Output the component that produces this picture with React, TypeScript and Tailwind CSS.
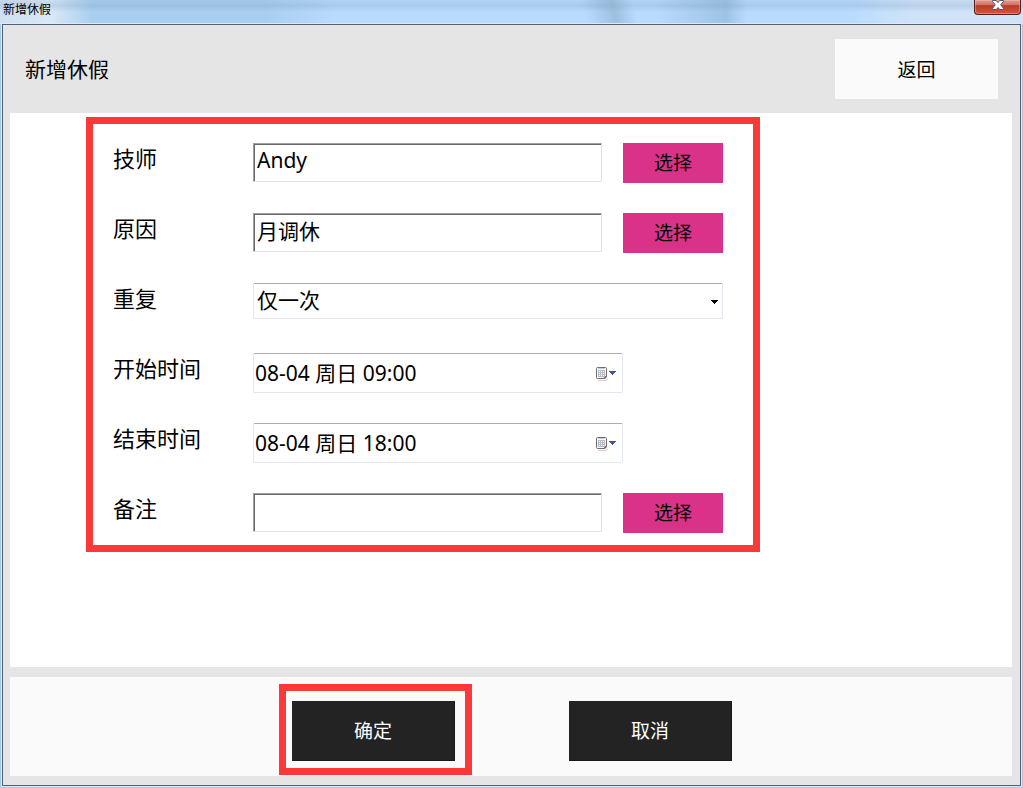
import type { ReactNode } from "react";

const FIELD_TEXT = "text-[21px] leading-8 text-black";
const THIN_BORDER =
  "rounded-xs border border-[#e2e6ee] border-t-[#abadb3] bg-white";
const SUNKEN_BORDER =
  "border border-[#e3e3e3] border-t-[#a0a0a0] border-l-[#a0a0a0] bg-white shadow-[inset_1px_1px_0_#696969]";

function Row({
  id,
  label,
  children,
}: {
  id: string;
  label: string;
  children: ReactNode;
}) {
  return (
    <div className="flex h-10 items-start">
      <label
        htmlFor={id}
        className="w-[140px] shrink-0 text-[22px] leading-[30px] text-black"
      >
        {label}
      </label>
      {children}
    </div>
  );
}

function PickerRow({
  id,
  label,
  value,
}: {
  id: string;
  label: string;
  value: string;
}) {
  return (
    <Row id={id} label={label}>
      <input
        id={id}
        type="text"
        defaultValue={value}
        className={`h-[39px] min-w-0 flex-1 rounded-none px-[3px] pb-1.5 outline-none ${SUNKEN_BORDER} ${FIELD_TEXT}`}
      />
      <button
        type="button"
        className="ml-[21px] h-10 w-[100px] shrink-0 bg-[#db3289] text-[19px] text-black"
      >
        选择
      </button>
    </Row>
  );
}

function CalendarIcon() {
  return (
    <svg width="21" height="14" viewBox="0 0 21 14" aria-hidden="true">
      <path d="M2 13h8l2-2v1l-2 2H2z" fill="#d0d0d0" />
      <path d="M.5 1.5Q.5.5 1.5.5h9v9.5l-2 2h-7q-1 0-1-1z" fill="#f5f6f8" />
      <path
        d="M8.500 11.500h-7q-1 0-1-1v-9q0-1 1-1h8q1 0 1 1V9.500"
        fill="none"
        stroke="#7a6a66"
      />
      <path d="M8 9h3v1l-2 2H8z" fill="#85736f" />
      <path d="M2 1h7v1H2z" fill="#c9cdd3" />
      <path d="M2 3h7v7H2z" fill="#b4bfca" />
      <path
        d="M3 4h1v1H3zM5 4h1v1H5zM7 4h1v1H7zM3 6h1v1H3zM5 6h1v1H5zM7 6h1v1H7zM3 8h1v1H3zM5 8h1v1H5zM7 8h1v1H7z"
        fill="#fff"
      />
      <path d="M13 4h7v1h-1v1h-1v1h-1v1h-1V7h-1V6h-1V5h-1z" fill="#42598a" />
    </svg>
  );
}

function DateRow({
  id,
  label,
  value,
}: {
  id: string;
  label: string;
  value: string;
}) {
  return (
    <Row id={id} label={label}>
      <div className="flex min-w-0 flex-1 pr-[100px]">
        <div
          className={`flex h-10 min-w-0 flex-1 items-center pr-[5px] pl-px ${THIN_BORDER}`}
        >
          <input
            id={id}
            type="text"
            defaultValue={value}
            className={`min-w-0 flex-1 bg-transparent outline-none ${FIELD_TEXT}`}
          />
          <button type="button" aria-label={`${label} 日历`} className="pt-0.5">
            <CalendarIcon />
          </button>
        </div>
      </div>
    </Row>
  );
}

function FooterButton({ children }: { children: ReactNode }) {
  return (
    <button
      type="button"
      className="h-[60px] w-[163px] border-r border-b border-[#191919] bg-[#232323] pt-0.5 text-[19px] text-white"
    >
      {children}
    </button>
  );
}

export default function App() {
  return (
    <div className="flex min-h-screen flex-col bg-[#a9cbee] font-['Noto_Sans','Noto_Sans_CJK_SC',sans-serif]">
      <header className="flex h-6 items-start justify-between bg-[linear-gradient(to_bottom,rgba(110,140,175,0.1),rgba(110,140,175,0.22)_25%,transparent_50%),linear-gradient(75deg,transparent_57%,rgba(120,160,185,0.45)_60%,transparent_62%),linear-gradient(to_right,#cfe0f2,#d9e8f6_5%,#a9cfef_9%,#a9cfef_26%,#b9dcfd_33%,#b9dcfd_64%,#9dc3e2_71%,#b9dcfd_73%,#b9dcfd_83%,#d0e4f8_90%)] pr-0.5">
        <span className="pl-[3px] text-[12px] leading-5 text-black">
          新增休假
        </span>
        <button
          type="button"
          aria-label="关闭"
          className="flex h-[15px] w-[47px] items-start justify-center rounded-b-[4px] border border-t-0 border-[#5a1e1e] bg-[linear-gradient(to_bottom,#dd9c90,#cf7565_35%,#bb3a25_40%,#d2553c)] shadow-[inset_0_0_0_1px_rgba(255,200,190,0.4)]"
        >
          <svg width="12" height="10" viewBox="0 0 12 10" aria-hidden="true">
            <path
              d="M.5 .5h3.800L6 2.500 7.700.5h3.800v1L8.700 4.800l2.800 3.500v1.200H7.700L6 7.500 4.300 9.500H.5V8.300l2.800-3.500L.5 1.500z"
              fill="#fff"
              stroke="#535666"
            />
          </svg>
        </button>
      </header>

      <main className="mx-0.5 mb-0.5 flex flex-1 flex-col border border-[#53616f] bg-[#e5e5e5] pr-2 pb-[9px] pl-[7px] shadow-[0_0_0_1px_#d9eafa]">
        <div className="flex h-[88px] shrink-0 items-center justify-between pr-[14px] pl-[15px]">
          <h1 className="pt-0.5 text-[21px] text-black">新增休假</h1>
          <button
            type="button"
            className="h-[60px] w-[163px] bg-[#fafafa] pt-0.5 text-[19px] text-black"
          >
            返回
          </button>
        </div>

        <section className="flex-1 bg-white pt-1 pl-[76px]">
          <form className="flex max-w-[674px] flex-col gap-[30px] border-7 border-[#fc3838] pt-[19px] pr-[30px] pb-3 pl-5">
            <PickerRow id="technician" label="技师" value="Andy" />
            <PickerRow id="reason" label="原因" value="月调休" />
            <Row id="repeat" label="重复">
              <div className="grid min-w-0 flex-1 items-center">
                <select
                  id="repeat"
                  className={`col-start-1 row-start-1 h-9 w-full appearance-none pr-5 pb-0.5 pl-[3px] outline-none ${THIN_BORDER} ${FIELD_TEXT}`}
                >
                  <option>仅一次</option>
                </select>
                <svg
                  width="7"
                  height="4"
                  viewBox="0 0 7 4"
                  aria-hidden="true"
                  className="pointer-events-none col-start-1 row-start-1 mt-0.5 mr-[5px] justify-self-end"
                >
                  <path d="M0 0h7v1H6v1H5v1H4v1H3V3H2V2H1V1H0z" fill="#000" />
                </svg>
              </div>
            </Row>
            <DateRow id="start" label="开始时间" value="08-04 周日 09:00" />
            <DateRow id="end" label="结束时间" value="08-04 周日 18:00" />
            <PickerRow id="remark" label="备注" value="" />
          </form>
        </section>

        <footer className="mt-[10px] flex h-[99px] shrink-0 items-start justify-center bg-[#fafafa] pt-[7px]">
          <div className="border-7 border-[#fc3838] pt-[10px] pr-[10px] pb-[7px] pl-1.5">
            <FooterButton>确定</FooterButton>
          </div>
          <div className="pt-[17px] pr-[11px] pl-[97px]">
            <FooterButton>取消</FooterButton>
          </div>
        </footer>
      </main>
    </div>
  );
}
